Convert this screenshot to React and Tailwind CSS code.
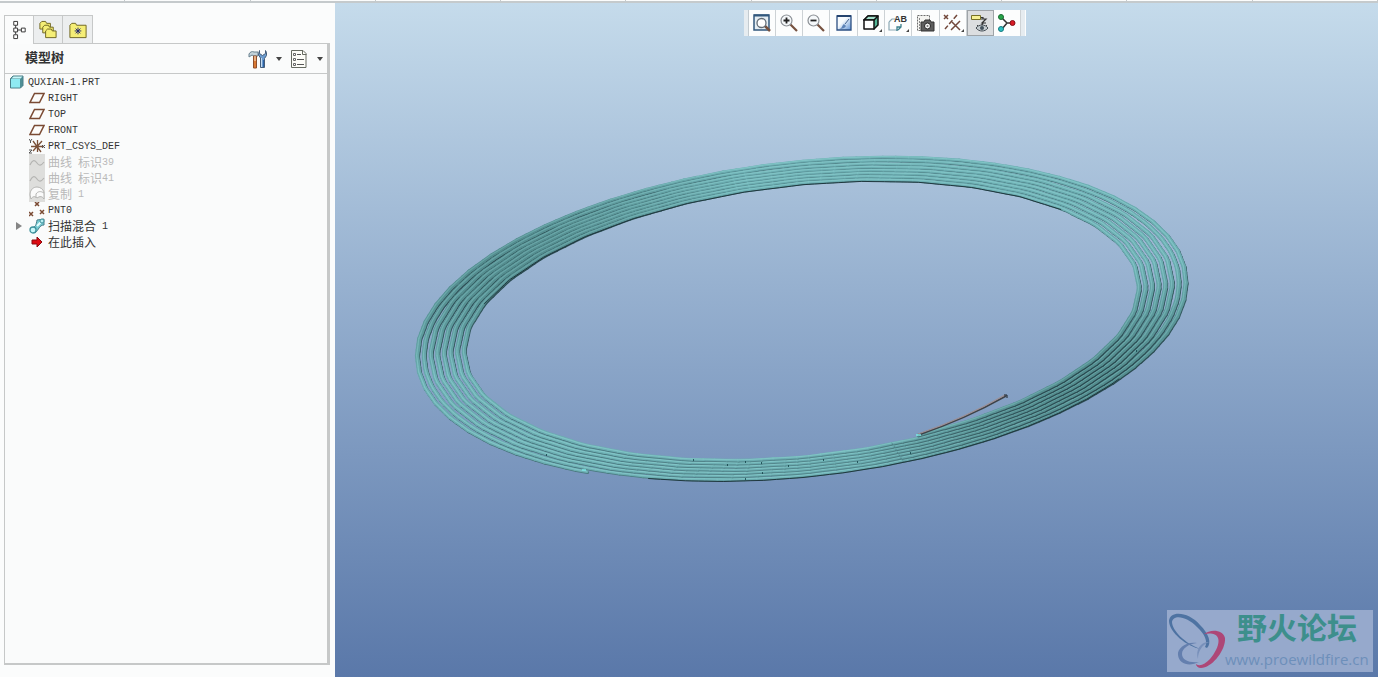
const TREE_ITEMS = [
  { icon: "part", text: "QUXIAN-1.PRT", root: true },
  { icon: "plane", text: "RIGHT" },
  { icon: "plane", text: "TOP" },
  { icon: "plane", text: "FRONT" },
  { icon: "csys", text: "PRT_CSYS_DEF" },
  { icon: "curve", text: "曲线 标识39", hidden: true },
  { icon: "curve", text: "曲线 标识41", hidden: true },
  { icon: "copy", text: "复制 1", hidden: true },
  { icon: "points", text: "PNT0" },
  { icon: "blend", text: "扫描混合 1", expandable: true },
  { icon: "insert", text: "在此插入" },
];

const TREE_ICONS = {
  part: (
    <>
      <path d="M1.500 4.500 4 2h10v9.500L11.500 14h-10z" fill="#4f8f96" stroke="#4a7f88" />
      <path d="M2 5h9v8.500H2z" fill="#8eeaf2" />
      <path d="M2.500 4.500 4.500 2.500h9L11.500 4.500z" fill="#c9f7fa" />
    </>
  ),
  plane: <path d="M5.500 3.500H15L10.500 12.500H1z" fill="#fdfcfa" stroke="#7a4a33" strokeWidth="1.500" />,
  csys: (
    <>
      <path d="M2 8.500h13M8.500 2v12M4 3l8 11M13 3 4 13" stroke="#7a5038" strokeWidth="1.300" />
      <path d="M0 1l1.500 2L3 1M1.500 3v2M0 12h3l-3 3h3M13 7l3 3M16 7l-3 3" stroke="#555" fill="none" />
    </>
  ),
  curve: (
    <>
      <path d="M0 0h16v16H0z" fill="#dededc" />
      <path d="M1 11c3-6 5-5 7-2s4 3 7-1" fill="none" stroke="#b4b4b2" strokeWidth="1.200" />
    </>
  ),
  copy: (
    <>
      <path d="M0 0h16v16H0z" fill="#dededc" />
      <path d="M1 9C1 3 5 1 8 1s6 2 7 5v7c-2-3-4-3-7-1-2-2-4-2-6 1z" fill="#fafafa" stroke="#b4b4b2" />
      <path d="M7 12V8c2-3 5-3 8-1" fill="none" stroke="#b4b4b2" />
    </>
  ),
  points: (
    <path d="M6 0l4 4M10 0 6 4M0 10l4 4M4 10l-4 4M11 8l4 4M15 8l-4 4" stroke="#7a4a33" strokeWidth="1.500" />
  ),
  blend: (
    <>
      <path d="M2 10C7 9 7 7 8 2l7-1v6c-5 0-5 5-9 8z" fill="#76cbd2" stroke="#4b7f8c" />
      <path d="M8 8l4-4" stroke="#e8feff" strokeWidth="2" />
      <circle cx="4" cy="12" r="3" fill="#c9f7fa" stroke="#3f929c" strokeWidth="1.300" />
      <circle cx="13" cy="3" r="2" fill="#b9eef2" stroke="#3f929c" />
    </>
  ),
  insert: <path d="M3 6h5V3l5 5-5 5v-3H3z" fill="#dd0b12" stroke="#8b0a0e" />,
};

function Folder({ x, y, w = 12, h = 9 }) {
  return (
    <path
      d={`M${x} ${y + h}V${y + 2}l2-2h4l1 2h${w - 7}v${h - 2}z`}
      fill="#f5ee76"
      stroke="#6e6420"
    />
  );
}

const TABS = [
  {
    label: "模型树",
    art: (
      <g fill="#fff" stroke="#333">
        <path d="M6.500 5v10M7 10.500h6" />
        <path d="M4.500 1.500h4v4h-4zM4.500 8.500h4v4h-4zM4.500 15.500h4v4h-4zM12.500 8.500h4v4h-4z" />
      </g>
    ),
  },
  {
    label: "文件夹浏览器",
    art: (
      <>
        <Folder x={1.5} y={1.5} w={11} h={8} />
        <Folder x={4.5} y={5.5} w={11} h={8} />
        <Folder x={7.5} y={9.5} w={11} h={9} />
      </>
    ),
  },
  {
    label: "收藏夹",
    art: (
      <>
        <Folder x={1.5} y={3.5} w={17} h={15} />
        <path d="M10 8v7M6.500 11.500h7M7.500 9l5 5M12.500 9l-5 5" stroke="#22266e" />
      </>
    ),
  },
];

const magnifier = (
  <>
    <path d="M11 11l7 7" stroke="#76513f" strokeWidth="2.200" />
    <circle cx="7.500" cy="7.500" r="5.500" fill="#f5f8fa" stroke="#8a8f94" strokeWidth="1.200" />
  </>
);

const VIEW_TOOLS = [
  {
    label: "重新调整",
    art: (
      <>
        <path d="M2 2h15v15H2z" fill="#e4edf3" stroke="#31577c" strokeWidth="1.500" />
        <path d="M2 2.500h15" stroke="#31577c" strokeWidth="2" />
        <path d="M13 13l5 5" stroke="#76513f" strokeWidth="2.500" />
        <circle cx="9.500" cy="10" r="4.500" fill="#fff" stroke="#626c75" strokeWidth="1.300" />
      </>
    ),
  },
  {
    label: "放大",
    art: (
      <>
        {magnifier}
        <path d="M4.500 7.500h6M7.500 4.500v6" stroke="#222" strokeWidth="1.800" />
      </>
    ),
  },
  {
    label: "缩小",
    art: (
      <>
        {magnifier}
        <path d="M4.500 7.500h6" stroke="#222" strokeWidth="1.800" />
      </>
    ),
  },
  {
    label: "重画",
    art: (
      <>
        <defs>
          <linearGradient id="repaint" x1="0" y1="0" x2="1" y2="1">
            <stop offset="0.400" stopColor="#f6fafd" />
            <stop offset="1" stopColor="#5f93d6" />
          </linearGradient>
        </defs>
        <path d="M3 3h14v14H3z" fill="#fff" />
        <path d="M3 3h14v14H3z" fill="url(#repaint)" stroke="#2b4f82" strokeWidth="1.300" />
        <path d="M5 16c3 0 3-4 5-5l2 2c-1 2-3 3-7 3z" fill="#5c83b8" />
        <path d="M11 11l4-5" stroke="#41618f" />
        <path d="M3 3h14" stroke="#24436e" strokeWidth="2" />
      </>
    ),
  },
  {
    label: "显示样式",
    menu: true,
    art: (
      <g stroke="#111" strokeWidth="1.500" strokeLinejoin="round">
        <path d="M3 7l4-4h10v9l-4 4z" fill="#53b595" />
        <path d="M3 7l4-4h10l-4 4z" fill="#a3e0cb" />
        <path d="M3 7h10v9H3z" fill="#fff" />
      </g>
    ),
  },
  {
    label: "已保存方向",
    menu: true,
    art: (
      <>
        <path d="M1 9l3-3h3M1 9v8h9" fill="none" stroke="#8ba9b5" strokeWidth="1.200" />
        <path d="M10 17l3-3v-3M9 18v-4h4" fill="none" stroke="#3b7f8c" strokeWidth="1.300" />
        <text x="6" y="9" fontFamily="Liberation Sans, sans-serif" fontSize="9" fontWeight="700" fill="#333">AB</text>
      </>
    ),
  },
  {
    label: "视图管理器",
    art: (
      <>
        <path d="M2.500 2.500h12v15h-12z" fill="#f4f4f1" stroke="#6d6d6d" strokeDasharray="2 1" />
        <path d="M4.500 5v11" stroke="#888" strokeDasharray="2 1" />
        <path d="M6 9h3l1-2h5l1 2h3v9H6z" fill="#5d5d5d" stroke="#333" />
        <circle cx="12.500" cy="13" r="3" fill="#f4f4f4" stroke="#222" />
        <circle cx="12.500" cy="13" r="1" fill="#777" />
      </>
    ),
  },
  {
    label: "基准显示过滤器",
    menu: true,
    art: (
      <>
        <path d="M1 2l4 4M5 2 1 6M9 9l8 8M17 8l-9 9" stroke="#71473a" strokeWidth="1.500" />
        <path d="M14 2 2 16" stroke="#71473a" strokeWidth="1.500" strokeDasharray="5 2" />
      </>
    ),
  },
  {
    label: "注释显示",
    active: true,
    art: (
      <>
        <path d="M1.500 2.500h9v4h-9z" fill="#f7f195" stroke="#777024" />
        <path d="M11 4.500h2v1M11 6h5l-4 4h4M13 10l-1 2" fill="none" stroke="#333" strokeWidth="1.200" />
        <path d="M6 15c3-4 9-4 12 0-3 4-9 4-12 0z" fill="#c5ccd0" stroke="#444d55" />
        <circle cx="12" cy="15" r="2" fill="#44525d" />
        <path d="M7 12l1 1M17 12l-1 1M12 11v1" stroke="#444" />
      </>
    ),
  },
  {
    label: "旋转中心",
    art: (
      <>
        <path d="M5 5l5 5M5 16l5-6M10 10h5" stroke="#333" strokeWidth="1.500" fill="none" />
        <circle cx="4" cy="4" r="2.500" fill="#27a54a" stroke="#176b31" />
        <circle cx="4" cy="16" r="2.500" fill="#2dbfc0" stroke="#167a80" />
        <circle cx="15.500" cy="10" r="2.500" fill="#d91a25" stroke="#86101a" />
      </>
    ),
  },
];

const RAD = Math.PI / 180;
const START = 124;
const END = 70 + 360 * 8;

// One point of the flat spiral, seen in perspective, at angle deg.
function spiralPoint(deg) {
  const f = (deg - START) / (END - START);
  const rx = 387 - 52 * f;
  const ry = 163.5 - 25 * f;
  return [803 + rx * Math.cos(deg * RAD), 319 + ry * Math.sin((deg - 13) * RAD)];
}

// The same curve as drawn: straight facets, `facet` degrees long.
function facetPoint(deg, facet) {
  const a = Math.floor(deg / facet) * facet;
  const k = (deg - a) / facet;
  const [x1, y1] = spiralPoint(a);
  const [x2, y2] = spiralPoint(a + facet);
  return [x1 + (x2 - x1) * k, y1 + (y2 - y1) * k];
}

function mix(a, b, k) {
  const c = a.map((v, i) => Math.round(v + (b[i] - v) * k));
  return `rgb(${c[0]},${c[1]},${c[2]})`;
}

function buildTurns() {
  const turns = [];
  for (let n = 0; n < 8; n++) {
    const from = n === 0 ? START : n * 360 + 75;
    const to = Math.min((n + 1) * 360 + 75, END);
    const facet = n < 2 ? 6 : 10;
    const segments = [];
    for (let d = from; d < to; d += 2) {
      const next = Math.min(d + 2, to);
      const [x1, y1] = facetPoint(d, facet);
      const [x2, y2] = facetPoint(next, facet);
      const shade = Math.max(0, Math.cos(2 * (d - 35) * RAD));
      const side = Math.cos(d * RAD) ** 2;
      segments.push({
        x1, y1, x2, y2,
        width: 2.5 + 1.8 * side,
        dark: mix([84, 136, 141], [42, 74, 80], Math.max(shade, side * 0.7)),
        body: mix([108, 174, 178], [84, 141, 143], shade),
        light: mix([128, 195, 197], [104, 164, 166], shade),
      });
    }
    turns.push(segments);
  }
  return turns;
}

const TURNS = buildTurns();

function edgePath(from, to, facet) {
  const pts = [];
  for (let d = from; d <= to; d += 2) {
    const [x, y] = facetPoint(d, facet);
    pts.push(`${x.toFixed(1)} ${(y + 2).toFixed(1)}`);
  }
  return `M${pts.join("L")}`;
}

function SpiralModel() {
  return (
    <svg className="absolute inset-0 h-full w-full" viewBox="335 3 1043 674" role="img" aria-label="QUXIAN-1">
      {TURNS.map((segments, n) => (
        <g key={n} strokeLinecap="round">
          {segments.map((s, i) => (
            <line key={`d${i}`} x1={s.x1 + 0.8} y1={s.y1 + 1} x2={s.x2 + 0.8} y2={s.y2 + 1} stroke={s.dark} strokeWidth={s.width} />
          ))}
          {segments.map((s, i) => (
            <line key={`b${i}`} x1={s.x1} y1={s.y1} x2={s.x2} y2={s.y2} stroke={s.body} strokeWidth={s.width} />
          ))}
          {segments.map((s, i) => (
            <line key={`l${i}`} x1={s.x1 - 0.4} y1={s.y1 - 0.4} x2={s.x2 - 0.4} y2={s.y2 - 0.4} stroke={s.light} strokeWidth="1.200" />
          ))}
        </g>
      ))}
      <path d={edgePath(END - 230, END - 110, 10)} fill="none" stroke="#20383f" />
      <path d={edgePath(START + 270, START + 350, 6)} fill="none" stroke="#20383f" />
      <path
        d="M693 460h1M745 462h1M761 463h1M727 465h1M788 466h1M762 473h1M745 479h1M823 460h1M857 462h1M910 453h1M546 455h1M1136 351h1"
        stroke="#0e3d42"
        strokeWidth="1.500"
      />
      <path d="M918 435Q965 419 1006 396" fill="none" stroke="#3e4248" strokeWidth="2" />
      <path d="M918 434Q965 418 1005 395" fill="none" stroke="#9d8f94" strokeWidth="1.300" />
      <path d="M1004 395h3v3" fill="none" stroke="#1c2227" />
      <path d="M582 470h4M916 435h5" stroke="#7fe8e8" strokeWidth="1.500" />
    </svg>
  );
}

// Chinese runs are set at 12px, Latin ones in a half-width 6px cell.
function TreeText({ text }) {
  const runs = text.match(/[\u4e00-\u9fff]+|[^\u4e00-\u9fff]+/g);
  return runs.map((run, i) =>
    /[\u4e00-\u9fff]/.test(run) ? (
      <span key={i} className="font-['Noto_Sans_CJK_SC',sans-serif] text-[12px] leading-4">{run}</span>
    ) : (
      <span key={i} className="pt-0.5 text-[10px] leading-4">{run}</span>
    ),
  );
}

function TreeRow({ item }) {
  return (
    <li className="flex h-4 items-center">
      {!item.root && (
        <span className="flex w-5 shrink-0 justify-center">
          {item.expandable && (
            <button type="button" aria-label="展开">
              <svg className="block h-2 w-2" viewBox="0 0 8 8">
                <path d="M1 0l6 4-6 4z" fill="#858585" />
              </svg>
            </button>
          )}
        </span>
      )}
      <svg className="h-4 w-4 shrink-0" viewBox="0 0 16 16">{TREE_ICONS[item.icon]}</svg>
      <span className={`ml-[3px] flex items-center whitespace-pre ${item.hidden ? "text-[#b9b9b9]" : "text-[#333]"}`}>
        <TreeText text={item.text} />
      </span>
    </li>
  );
}

function MenuArrow({ label }) {
  return (
    <button type="button" aria-label={label} className="ml-1 flex h-6 w-3.5 items-center justify-center">
      <svg className="h-1 w-1.5" viewBox="0 0 6 4">
        <path d="M0 0h6L3 4z" fill="#444" />
      </svg>
    </button>
  );
}

function ModelTreePanel() {
  return (
    <aside className="flex w-[335px] shrink-0 flex-col bg-[#fbfcfc] pt-3 pr-[5px] pb-3 pl-1">
      <div className="flex h-[29px]" role="tablist">
        {TABS.map((tab, i) => (
          <button
            key={tab.label}
            type="button"
            role="tab"
            aria-label={tab.label}
            aria-selected={i === 0}
            className={
              i === 0
                ? "flex w-[29px] items-center justify-center border-t border-l border-[#c6c8c8] bg-[#fbfcfc]"
                : "flex w-[30px] items-center justify-center border-t border-r border-b border-[#c6c8c8] bg-[#eceeef] nth-2:border-l"
            }
          >
            <svg className="h-5 w-5" viewBox="0 0 20 21">{tab.art}</svg>
          </button>
        ))}
        <span className="flex-1 border-b border-[#c6c8c8]" />
      </div>
      <section className="flex flex-1 flex-col border-r-3 border-b-2 border-l border-[#c6c8c8] bg-[#fafbfb]">
        <header className="flex h-[30px] items-center border-b border-[#c6c8c8] pl-5">
          <h1 className="flex-1 text-[13px] font-bold text-[#333]">模型树</h1>
          <button type="button" aria-label="设置">
            <svg className="block h-5 w-5" viewBox="0 0 20 20">
              <path d="M1 5c1-2 3-3 5-2h4v4H6L4 6 1 8z" fill="#c3d3db" stroke="#6b8290" />
              <path d="M5.500 7h3v12h-3z" fill="#d97833" stroke="#8f4f2c" />
              <path d="M6.500 7h1v5h-1z" fill="#f8e6cd" />
              <path d="M11.500 1.500v3l3 2 3-2v-3l1 2v3l-2 3v9h-4V9l-2-3z" fill="#6b9bce" stroke="#465e7a" />
              <path d="M13.500 9v9" stroke="#c5dcf2" />
              <path d="M15.500 11v7" stroke="#2f64a6" />
            </svg>
          </button>
          <MenuArrow label="设置菜单" />
          <button type="button" aria-label="显示" className="ml-[3px]">
            <svg className="block h-5 w-5" viewBox="0 0 20 20">
              <path d="M2.500 1.500H14l3 3v14H2.500z" fill="#fdfdf8" stroke="#666a60" />
              <path d="M13.500 1.500v4h4" fill="none" stroke="#666a60" />
              <path d="M8 5.500h4M8 10.500h7M8 15.500h7" stroke="#555" />
              <path d="M4.500 4.500h2v2h-2zM4.500 9.500h2v2h-2zM4.500 14.500h2v2h-2z" fill="#fff" stroke="#666" />
            </svg>
          </button>
          <MenuArrow label="显示菜单" />
        </header>
        <ul className="pl-1">
          {TREE_ITEMS.map((item, i) => (
            <TreeRow key={i} item={item} />
          ))}
        </ul>
      </section>
    </aside>
  );
}

function ViewToolbar() {
  return (
    <div className="relative flex h-[26px] w-[282px] bg-[#fcfdfd]" role="toolbar" aria-label="视图">
      <span className="w-[5px] border-r border-[#c3cbd0] bg-[#e6ecf0]" />
      {VIEW_TOOLS.map((tool) => (
        <button
          key={tool.label}
          type="button"
          aria-label={tool.label}
          className={`relative flex flex-1 items-center justify-center border-r border-[#cdd2d5] ${
            tool.active ? "bg-[#dcdee0] outline -outline-offset-1 outline-[#9fa4a8]" : ""
          }`}
        >
          <svg className="h-5 w-5" viewBox="0 0 20 20">{tool.art}</svg>
          {tool.menu && (
            <svg className="absolute right-0.5 bottom-1 h-[3px] w-[3px]" viewBox="0 0 3 3">
              <path d="M3 0v3H0z" fill="#444" />
            </svg>
          )}
        </button>
      ))}
      <span className="w-1 bg-[#e6ecf0]" />
    </div>
  );
}

function Watermark() {
  return (
    <div className="absolute right-[5px] bottom-[5px] flex h-[62px] w-[206px] bg-[#96a9cc]">
      <svg className="h-[62px] w-[58px] shrink-0" viewBox="0 0 58 62">
        <path d="M34 39C20 37 2 22 2 11C3 0 22 2 33 15C42 24 45 33 40 38L38 37C41 32 38 24 30 17C20 6 6 4 5 12C5 20 18 34 34 39z" fill="#4e73a2" />
        <path d="M37 24C43 19 56 19 58 28C59 40 45 58 34 58C31 58 29 56 29 54C33 57 38 54 43 49C49 42 53 33 51 28C49 23 43 23 37 24z" fill="#ad4777" />
        <path d="M30 33C20 31 10 38 11 45C12 54 22 57 32 52C22 53 15 50 15 44C15 38 22 34 30 33z" fill="#647fae" />
        <path d="M42 32C34 31 28 40 31 49C31 41 35 35 42 32z" fill="#7890ba" />
      </svg>
      <div className="flex flex-col whitespace-nowrap">
        <span className="pt-1 pl-3 text-[30px] leading-[35px] font-bold text-[#3d8f8c]">野火论坛</span>
        <a href="#forum" className="font-['Open_Sans',sans-serif] text-[15px] leading-5 text-[#6d8fba]">
          www.proewildfire.cn
        </a>
      </div>
    </div>
  );
}

export default function App() {
  return (
    <div className="flex h-screen flex-col overflow-hidden bg-[#fbfcfc] font-['Liberation_Mono','Noto_Sans_CJK_SC',monospace]">
      <div className="flex h-[3px] shrink-0 border-b-2 border-[#c5cacc]">
        {Array.from({ length: 11 }, (_, i) => (
          <span key={i} className="flex-1 border-r border-[#c5cacc]" />
        ))}
      </div>
      <div className="flex min-h-0 flex-1">
        <ModelTreePanel />
        <main className="relative flex-1 bg-linear-to-b from-[#c5dbeb] to-[#5a78a9]">
          <SpiralModel />
          <div className="flex justify-center pt-[7px] pl-14">
            <ViewToolbar />
          </div>
          <Watermark />
        </main>
      </div>
    </div>
  );
}
